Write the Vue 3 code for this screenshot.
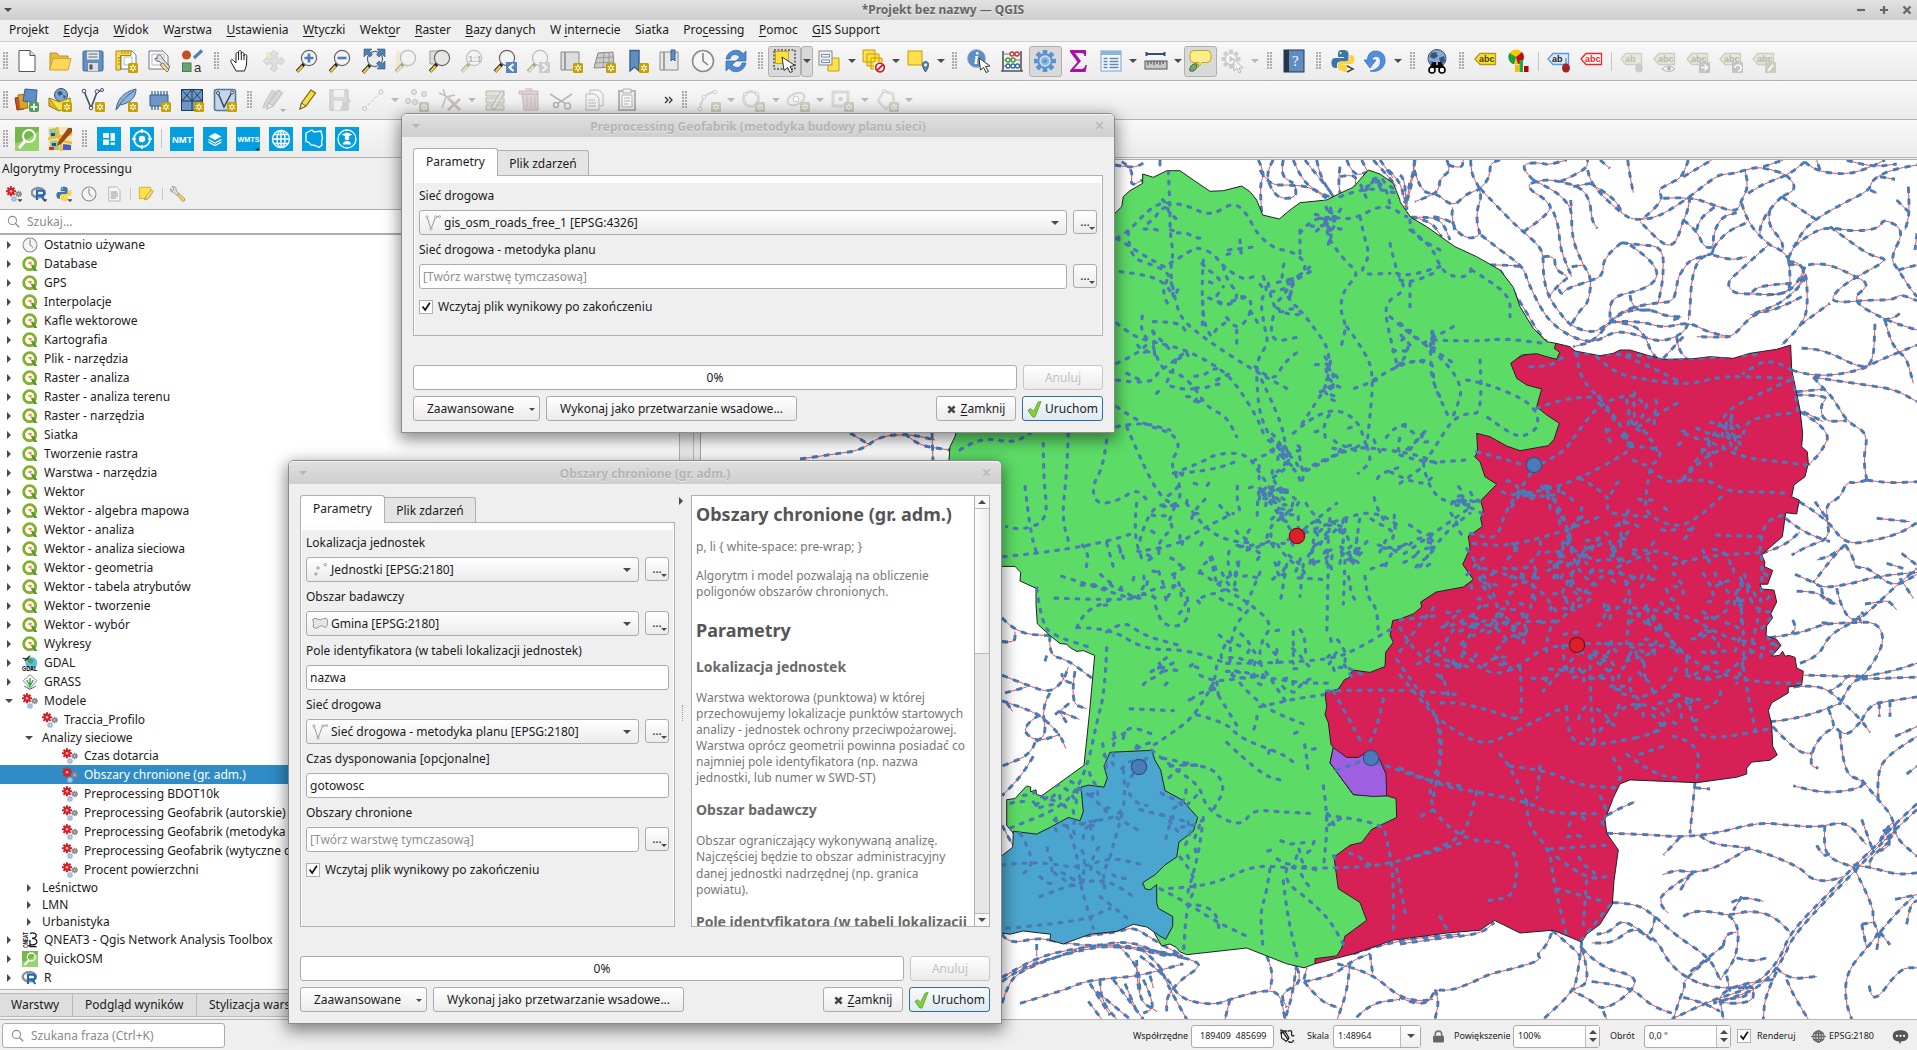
<script setup>
/* ---------- toolbar icons (24 x 24 artwork) ---------- */
const star = (c) => `<rect x="14" y="14" width="10" height="10" rx="1.5" fill="${c}"/><path d="M19 15.500v7M16 17.200l6 3.600M22 17.200l-6 3.600" stroke="#fff" stroke-width="1.300"/><circle cx="19" cy="19" r="1.100" fill="${c}"/>`
const badge = star('#c4a000')
const badgeOff = star('#8c8a6a')
const lens = (inner = '', fill = '#f4f4f4', x = 14, y = 9) =>
  `<path d="M${x - 5} ${y + 6}l-7 7.5" stroke="#222" stroke-width="3.4"/><path d="M${x - 6.5} ${y + 8}l-5 5.4" stroke="#f5c842" stroke-width="2.2"/><circle cx="${x}" cy="${y}" r="7.6" fill="${fill}" stroke="#666" stroke-width="1.2"/>${inner}`
const tag = (fill, stroke, color, txt = 'abc') =>
  `<path d="M1 10L6 4.500H21.500V15.500H6Z" fill="${fill}" stroke="${stroke}" stroke-width="1.300"/><text x="5" y="13.300" font-family="Liberation Sans, sans-serif" font-weight="bold" font-size="9" fill="${color}">${txt}</text>`
const gear = (cx, cy, r, c) => {
  let s = ''
  for (let i = 0; i < 8; i++) {
    const a = (i * Math.PI) / 4
    s += `M${cx} ${cy}L${(cx + Math.cos(a) * r).toFixed(1)} ${(cy + Math.sin(a) * r).toFixed(1)}`
  }
  return `<path d="${s}" stroke="${c}" stroke-width="${(r * 0.42).toFixed(1)}"/><circle cx="${cx}" cy="${cy}" r="${r * 0.68}" fill="${c}"/><circle cx="${cx}" cy="${cy}" r="${r * 0.25}" fill="#fff" opacity=".7"/>`
}
const models = gear(7.5, 8, 7.5, '#d42027') + gear(19, 12, 5, '#888') + gear(12, 19.5, 4.6, '#9db9dd')
const python = '<path d="M12 1c-5 0-5 2-5 4v3h6v1H4c-3 0-3.500 3-3.500 5s1 5 3.500 5h2v-3c0-2 1-3.500 3.500-3.500h5c2 0 3-1 3-3V5c0-3-2-4-5.500-4z" fill="#3a76a9"/><path d="M12.500 23c5 0 5-2 5-4v-3h-6v-1H20c3 0 3.500-3 3.500-5s-1-4-3-4h-2v3c0 2-1 3.500-3.500 3.500h-5c-2 0-3 1-3 3v3.500c0 2 2 3 5.500 3z" fill="#ffd23e"/><circle cx="9.500" cy="4" r="1" fill="#fff"/>'
const blueSq = (g) => `<rect width="24" height="24" fill="#049fe0"/>${g}`
const clock = '<circle cx="12" cy="12" r="10.500" fill="#f4f5f5" stroke="#8a8d8d" stroke-width="1.600"/><path d="M12 4v8l5 4" fill="none" stroke="#777" stroke-width="1.400"/>'
const rlogo = '<ellipse cx="11" cy="10" rx="10" ry="7" fill="none" stroke="#8d8f94" stroke-width="3.500"/><path d="M9 21V7h7c5 0 5 7 0 7h-7m6 0l5 7" fill="none" stroke="#2266b8" stroke-width="3.200"/>'
const magn = '<circle cx="14" cy="9" r="6" fill="none" stroke="#fff" stroke-width="2"/><path d="M10 14l-6 7" stroke="#fff" stroke-width="3"/>'
const pencil = (c, t) => `<path d="M5 21l1.500-6L16 2l4.500 3L11 18z" fill="${c}" stroke="${t}" stroke-width="1.200"/><path d="M5 21l1.500-6 4.500 3z" fill="#eee" stroke="${t}"/>`
const globe = '<circle cx="12" cy="9.500" r="9" fill="#8aa9cb" stroke="#34506f"/><path d="M6 4l5-1 2 4-4 3-4-2zM14 9l5-2 1 5-4 4zM5 12l4 1 1 4-3-1z" fill="#35577e"/>'
const menuMark = '<path d="M17 20h8l-4 4z" fill="#444"/>'

const icons = {
  page: '<path d="M4 1.500h11l5 5v16H4z" fill="#fff" stroke="#555"/><path d="M15 1.500v5h5" fill="#ddd" stroke="#555"/>',
  folder: '<path d="M2 21V4h7l2 3h9v4" fill="#e9bb3a" stroke="#b99225"/><path d="M1.500 21L5 9.500H23L20 21z" fill="#fcd75e" stroke="#d1a42b"/>',
  save: '<rect x="2" y="2" width="20" height="20" rx="1.500" fill="#6390c1" stroke="#3c6492"/><rect x="6" y="2.500" width="12" height="8" fill="#e6e6e6"/><path d="M7.500 5h9M7.500 8h9" stroke="#666"/><rect x="7" y="14" width="10" height="8" fill="#ddd"/><rect x="8.500" y="15.500" width="3" height="5" fill="#555"/>',
  layout: '<path d="M7 2h11l4 4v14H7z" fill="#fff" stroke="#777"/><path d="M10 8h8v8h-8z" fill="none" stroke="#9db9dd"/><path d="M2 2h15v4.500H6.500V21H2z" fill="#f6d94e" stroke="#a98b00"/><path d="M4 9h2M4 12h2M4 15h2M8 3v2M11 3v2M14 3v2" stroke="#8a7000" stroke-width=".8"/>' + badge,
  style: '<path d="M2 2h14l5 5v13H2z" fill="#fff" stroke="#777"/><path d="M5 5h12v11H5z" fill="none" stroke="#9db9dd"/><path d="M10 7c2-2 5-1 5 2l8 9-3 3-8-9c-3 1-4-1-4-3l2 1z" fill="#ddd" stroke="#666"/><path d="M16 14l6 7-2 2-7-7z" fill="#efd98a" stroke="#777"/>',
  symbols: '<circle cx="6.500" cy="6" r="4.500" fill="#c44f25"/><path d="M14 9L22 1.500" stroke="#4d80b5" stroke-width="3.200"/><rect x="2.500" y="14" width="8.500" height="8.500" fill="#6aa672" stroke="#487b50"/><text x="14" y="22.500" font-family="Liberation Sans, sans-serif" font-size="13" fill="#333">a</text>',
  hand: '<path d="M7 22l-5-9c-1-2 1-3 2.500-1.500L7 14V5c0-2 2.500-2 2.500 0V3c0-2 2.800-2 2.800 0v2c0-2 2.700-2 2.700 0v2c0-2 2.800-2 2.800 0l-.3 9-2 6z" fill="#fff" stroke="#222"/><path d="M9.500 5v6M12.300 5v6M15 6v5" stroke="#222"/>',
  pan: '<g opacity=".45"><rect x="4" y="3" width="13" height="13" fill="#eadf9c"/><path d="M12 1l4 4h-2v5h5V8l4 4-4 4v-2h-5v5h2l-4 4-4-4h2v-5H5v2l-4-4 4-4v2h5V5H8z" fill="#c4ccd2" stroke="#999" stroke-width=".8"/></g>',
  zin: lens('<path d="M14 4.500v9M9.500 9h9" stroke="#4c7fb8" stroke-width="2.600"/>'),
  zout: lens('<path d="M9.500 9h9" stroke="#4c7fb8" stroke-width="2.600"/>'),
  full: lens('<path d="M3 0h8L8.500 2.500l3 3-2.500 2.500-3-3L3 8zM24 0h-8l2.500 2.500-3 3 2.500 2.500 3-3L24 8zM24 20h-8l2.500-2.500-3-3 2.500-2.500 3 3 3-3z" fill="#4d7fb4" stroke="#2c5783" stroke-width=".6"/>', '#eaeaea', 14, 10),
  zsel: '<g opacity=".4"><path d="M2 2h12v17H2z" fill="#eadf9c"/>' + lens() + '</g>',
  zlay: '<path d="M3 2h12v13H3z" fill="#ddd" stroke="#999"/>' + lens('', '#e4e6e2', 15),
  znat: '<g opacity=".35">' + lens('<text x="8" y="12.500" font-family="Liberation Sans, sans-serif" font-weight="bold" font-size="9.500" fill="#444">1:1</text>') + '</g>',
  zlast: lens() + '<rect x="13" y="13" width="11" height="11" fill="#5585bd"/><path d="M20.500 15l-4 3.500 4 3.500" fill="none" stroke="#fff" stroke-width="2"/>',
  znext: '<g opacity=".4">' + lens() + '<rect x="13" y="13" width="11" height="11" fill="#999"/><path d="M16.500 15l4 3.500-4 3.500" fill="none" stroke="#fff" stroke-width="2"/></g>',
  newmap: '<path d="M2 3h4v18H2zM6 3h14v18H6z" fill="#ddd" stroke="#888"/>' + badge,
  new3d: '<path d="M6 4l15-1 1 15-20 1z" fill="#ccc" stroke="#888"/><path d="M4 9l17-1M3 14l18-1M12 4l-1 14M17 4v14" stroke="#888" stroke-width=".7"/>' + badge,
  bookm: '<path d="M5 1.500h9V22l-4.500-4L5 22z" fill="#5f8fc2" stroke="#39618f" stroke-width="1.400"/>' + badge,
  books: '<path d="M2 3h4v18H2zM6 3h14v18H6z" fill="#e8e8e8" stroke="#888"/><path d="M13 1h4v11l-2-2-2 2z" fill="#5f8fc2" stroke="#39618f"/>',
  clock,
  refresh: '<path d="M2 10C4 0 16-1 19 5l3-3v10H12l4-4C12 4 7 5 6 10zM22 14c-2 10-14 11-17 5l-3 3V12h10l-4 4c4 4 9 3 10-2z" fill="#4d8bd0" stroke="#2e64a4" stroke-width=".7"/>',
  select: '<path d="M1 1h21v19H1z" fill="none" stroke="#111" stroke-dasharray="2 1.500"/><rect x="2.500" y="2.500" width="13" height="12" fill="#fbe03e" stroke="#c5a60d"/><path d="M9 8l13 8.500-5 1 2.500 5-2.500 1-2.500-5-3.500 3z" fill="#fff" stroke="#333"/>',
  selval: '<path d="M11 9h11v13H11z" fill="#fce14b" stroke="#c4a000"/><rect x="2" y="2" width="13" height="14" fill="#eee" stroke="#888"/><path d="M4.500 5.500h8v2.500h-8zM4.500 11h8v2.500h-8z" fill="#fff" stroke="#6b8eb4"/>',
  desel: '<path d="M1 1h12v12H1zM5 5h12v12H5zM9 9h11v11H9z" fill="#fce14b" stroke="#c4a000"/><rect x="12" y="13" width="12" height="11" rx="2" fill="#fff"/><circle cx="18" cy="18.500" r="4.300" fill="none" stroke="#d42027" stroke-width="1.800"/><path d="M15 21.500l6-6" stroke="#d42027" stroke-width="1.800"/>',
  selloc: '<rect x="2" y="2" width="14" height="14" fill="#fce14b" stroke="#c4a000"/><path d="M19.500 23c-5-7-3-10.500 0-10.500s5 3.500 0 10.500z" fill="#5c84a8" stroke="#3b617f"/><circle cx="19.500" cy="16" r="1.400" fill="#fff"/>',
  info: '<circle cx="9.500" cy="9.500" r="8.800" fill="#5d8fc5" stroke="#7b9fc4"/><text x="7" y="15" font-family="Liberation Serif, serif" font-style="italic" font-weight="bold" font-size="16" fill="#fff">i</text><path d="M12 9l11 8-4.500.5 3 5-2.500 1-2.500-5-3 2.500z" fill="#fff" stroke="#333"/>',
  abacus: '<path d="M3 2v20M21 2v20M1 22h22" stroke="#555" stroke-width="1.600"/><path d="M3 5h18M3 11h18M3 17h18" stroke="#777"/><g fill="#fff" stroke-width="1.400"><g stroke="#c33"><circle cx="12" cy="5" r="2"/><circle cx="17" cy="5" r="2"/></g><g stroke="#3a9f3a"><circle cx="8" cy="11" r="2"/><circle cx="13" cy="11" r="2"/></g><g stroke="#356ba5"><circle cx="8" cy="17" r="2"/><circle cx="13" cy="17" r="2"/><circle cx="17.500" cy="17" r="2"/></g></g>',
  gear: gear(12, 12, 11, '#5d92d0') + '<circle cx="12" cy="12" r="5" fill="#8fb5e2" stroke="#d7e5f5" stroke-width="1.300"/><circle cx="12" cy="12" r="2" fill="#5d92d0"/>',
  sigma: '<path d="M4 1h16v6h-1.500c-.5-2-1-3-4-3H9l6 8-7 8h7c3 0 4-2 4.500-4H21l-1.500 7H4v-1.500L11.500 13 4 3z" fill="#a613a6"/>',
  table: '<rect x="2" y="2" width="20" height="20" fill="#f4f8fc" stroke="#7ba0c8"/><path d="M2 2h20v4H2z" fill="#8db3db"/><path d="M4.500 9.500h4M10.500 9.500h9M4.500 12.500h4M10.500 12.500h9M4.500 15.500h4M10.500 15.500h9M4.500 18.500h4M10.500 18.500h9" stroke="#5f88b5" stroke-width="1.300"/>',
  ruler: '<path d="M2 5h19M2.500 3v4M20.500 3v4" stroke="#2f4f79" stroke-width="2"/><rect x="1" y="12" width="22" height="8" fill="#c7c7c7" stroke="#555"/><path d="M4 12v4M7 12v3M10 12v4M13 12v3M16 12v4M19 12v3" stroke="#444"/>',
  tip: '<path d="M6 1.500h13q4 0 4 4v4q0 4-4 4h-5l-4 5 1-5H6q-4 0-4-4v-4q0-4 4-4z" fill="#fbee86" stroke="#bfa71c"/><path d="M2 22c-1-5 3-8 7-7 0 5-2 8-7 7z" fill="#71a86f" stroke="#3a653a"/>',
  action: '<g opacity=".35">' + gear(10, 10, 9.500, '#888') + '<circle cx="10" cy="10" r="5" fill="#fff"/><path d="M8.500 7l5 3-5 3z" fill="#777"/><path d="M13 10l9 9h-4l2 4-2 1-2-5-3 3z" fill="#fff" stroke="#555"/></g>',
  help: '<rect x="2" y="1" width="20" height="22" fill="#5f8cc2" stroke="#29384b"/><path d="M2 1h5v22H2z" fill="#263749"/><text x="10" y="17" font-family="Liberation Serif, serif" font-size="15" fill="#fff">?</text>',
  python: python + '<path d="M16 17l6 3-6 3" fill="#fff" stroke="#444" stroke-width="1.500"/>',
  undo: '<path d="M6 22c8 2 14-3 15-9C22 5 16 1.500 11 2 6 2.500 3.500 6 3.500 11H0l6 8 6-8H8c0-4 8-6 8.500 1 .3 4-3 9-10.500 10z" fill="#4f8fdf" stroke="#2f6cc0" stroke-width=".7"/>',
  globe: globe + '<path d="M8 13h3v3h2v-3h3l4 6v3h-6v-3h-4v3H4v-3z" fill="#0a0a0a"/><circle cx="7" cy="21" r="3" fill="#fff" stroke="#000" stroke-width="1.600"/><circle cx="17" cy="21" r="3" fill="#fff" stroke="#000" stroke-width="1.600"/>',
  tagY: tag('#f9e13b', '#b39a12', '#4b3d00'),
  pie: '<circle cx="9" cy="8" r="7.500" fill="#f9c700"/><path d="M9 8L2.500 4A7.500 7.500 0 0 0 7 15.300z" fill="#17a045"/><path d="M9 8l6-5a7.500 7.500 0 0 1-4 12.300z" fill="#c00d0d"/><path d="M8 16h4v7H8z" fill="#fb0"/><path d="M12.500 11h3.500v12h-3.500z" fill="#1faa4c"/><path d="M17 17h4.500v6H17z" fill="#b00"/>',
  tagB: tag('#d9ebfb', '#5b9ada', '#222', 'ab') + '<path d="M19 9v8" stroke="#666"/><ellipse cx="19" cy="19" rx="4" ry="4.500" fill="#a22525"/>',
  tagR: tag('#fff', '#e22', '#e22'),
  tg1: '<g opacity=".45">' + tag('#dedcc6', '#a9a78a', '#77756a', 'ab') + '<ellipse cx="19" cy="19" rx="3.800" ry="4.500" fill="#a89b9b"/></g>',
  tg2: '<g opacity=".5">' + tag('#dedcc6', '#a9a78a', '#77756a') + '<path d="M9 20q6-6 13 0-6 5-13 0z" fill="#fff" stroke="#777"/><circle cx="16" cy="19.500" r="2" fill="#777"/></g>',
  tg3: '<g opacity=".5">' + tag('#dedcc6', '#a9a78a', '#77756a') + '<rect x="13" y="13" width="11" height="11" rx="1" fill="#999"/><path d="M15 18.500h6M18.500 15.500l3 3-3 3" stroke="#fff" stroke-width="1.700" fill="none"/></g>',
  tg4: '<g opacity=".5">' + tag('#dedcc6', '#a9a78a', '#77756a') + '<rect x="13" y="13" width="11" height="11" rx="1" fill="#999"/><path d="M16 19a3 3 0 1 1 3 3" stroke="#fff" stroke-width="1.700" fill="none"/></g>',
  tg5: '<g opacity=".5">' + tag('#dedcc6', '#a9a78a', '#77756a') + '<rect x="13" y="13" width="11" height="11" rx="1" fill="#aaa88a"/><path d="M16 22l5-6" stroke="#fff" stroke-width="2"/></g>',
  dsm: '<path d="M0 10l6-1 3 12-7 1z" fill="#c44f25" stroke="#8d3413"/><path d="M3 7l8-1 2 14-8 1z" fill="#e0a12b" stroke="#a06f13"/><path d="M10 1l12 1-1 13-13-2z" fill="#5f8fc2" stroke="#39618f"/><rect x="14" y="14" width="10" height="10" rx="2" fill="#4f9c5a"/><path d="M19 15.500v7M15.500 19h7" stroke="#fff" stroke-width="1.600"/>',
  gpkg: '<path d="M1 10l10 4 11-4v8l-11 5-10-5z" fill="#e0bd1d" stroke="#8d7508"/><circle cx="13" cy="7" r="6.500" fill="#7fa3c9" stroke="#34506f"/><path d="M9 4l4-1 2 3-4 2zM15 7l3 1-2 3z" fill="#35577e"/><path d="M1 10l10 4 11-4v8l-11 5z" fill="#f4e04b" stroke="#8d7508" stroke-width=".6"/>' + badge,
  shp: '<path d="M3 3l7 17L16 4l5-2" fill="none" stroke="#3c5068" stroke-width="1.600"/><g fill="#fff" stroke="#3c5068"><circle cx="3" cy="3" r="1.800"/><circle cx="10" cy="20" r="1.800"/><circle cx="16" cy="3.500" r="1.800"/><circle cx="21" cy="2" r="1.500"/></g>' + badge,
  spl: '<path d="M2 22C3 12 9 4 22 1c0 8-5 14-16 16z" fill="#8fb3d6" stroke="#3d6690"/><path d="M2 22C7 14 12 8 20 3" stroke="#3d6690" fill="none"/>' + badge,
  mem: '<path d="M3 7h18v11H3z" fill="#6b97c8" stroke="#365c87"/><path d="M5 3v4M8 3v4M11 3v4M14 3v4M17 3v4M20 3v4M5 18v4M8 18v4M11 18v4" stroke="#365c87" stroke-width="1.200"/>' + badge,
  mesh: '<rect x="1.500" y="1.500" width="21" height="21" fill="#6b97c8" stroke="#233a55"/><path d="M12 1v22M1 13h22M12 1l-10 12M12 13L22 2M2 2l10 11M13 2l9 11" stroke="#233a55"/>' + badge,
  gpx: '<rect x="1.500" y="1.500" width="21" height="21" rx="2" fill="#c4d6e9" stroke="#52779d" stroke-width="1.600"/><path d="M5 5l6 14L19 4" fill="none" stroke="#2f4662" stroke-width="1.500"/><g fill="#fff" stroke="#2f4662"><circle cx="5" cy="5" r="1.500"/><circle cx="19" cy="4.500" r="1.500"/></g>' + badge,
  edits: '<g opacity=".4"><path d="M1 20l2-6L10 2l4 2L7 17z" fill="#b9aaa2" stroke="#888"/>' + pencil('#b9aaa2', '#777') + '<path d="M18 21h6l-3 3z" fill="#555"/></g>',
  edit: pencil('#f3df4e', '#776700'),
  saveE: '<g opacity=".35"><rect x="2" y="2" width="18" height="20" fill="#aaa" stroke="#666"/><path d="M6 2h10v7H6z" fill="#eee"/><path d="M6 13h8v9H6z" fill="#eee"/><path d="M12 22l2-5 7-7 2 3-7 8z" fill="#a89090"/></g>',
  line: '<g opacity=".35" stroke="#666" fill="#fff"><path d="M3 21L20 4" stroke-dasharray="3 2"/><circle cx="3.500" cy="20.500" r="2"/><circle cx="20" cy="4" r="2"/></g>',
  pts: '<g opacity=".4"><g fill="#ccc" stroke="#777"><circle cx="9" cy="4" r="2.500"/><circle cx="19" cy="6" r="2.500"/><circle cx="3" cy="13" r="2.500"/><circle cx="10" cy="14" r="2.500"/></g>' + badgeOff + '</g>',
  vertex: '<g opacity=".4"><path d="M5 1l3 8M1 5l7 3M4 20L8 9l9-2" stroke="#777" stroke-width="1.500"/><path d="M10 10l12 12M22 11L10 22" stroke="#8d7f6c" stroke-width="3"/></g>',
  attrs: '<g opacity=".4"><path d="M3 3h18v5H3zM3 10h18v5H3zM3 17h18v5H3z" fill="#cfcba5" stroke="#666"/><path d="M8 20L18 3l3 2-9 16z" fill="#ccc" stroke="#666"/></g>',
  trash: '<g opacity=".4"><path d="M6 6h16v16H8z" fill="#c9a7a7" stroke="#866"/><path d="M3 3h19v3H3zM9 1h7v2" fill="#c9a7a7" stroke="#866"/><path d="M11 9v11M15 9v11M19 9v11" stroke="#866"/></g>',
  cut: '<g opacity=".4" fill="none" stroke="#666" stroke-width="1.600"><path d="M1 6l16 10M23 6L11 14l-3 2"/><circle cx="18.500" cy="18" r="3"/><circle cx="7" cy="17" r="2.500"/></g>',
  copy: '<g opacity=".45" fill="#f4f4f4" stroke="#777"><path d="M8 2h9l4 4v12H8z"/><path d="M4 6h9l4 4v12H4z"/><path d="M6 12h7M6 15h8M6 18h8"/></g>',
  paste: '<g opacity=".5" fill="#eee" stroke="#777"><path d="M4 3h16v19H4z" stroke-width="2"/><path d="M8 1h8v4H8z"/><path d="M7 7h10v12H7z" fill="#fff"/><path d="M9 10h6M9 13h6M9 16h4"/></g>',
  s1: '<g opacity=".35"><path d="M3 22C4 11 8 5 18 4" fill="none" stroke="#999" stroke-width="2"/><g fill="#fff" stroke="#888"><circle cx="3" cy="21" r="1.800"/><circle cx="7" cy="9" r="1.800"/><circle cx="18" cy="4" r="1.800"/></g>' + badgeOff + '</g>',
  s2: '<g opacity=".35"><circle cx="10" cy="11" r="7.500" fill="none" stroke="#aaa" stroke-width="3"/><g fill="#fff" stroke="#888"><circle cx="4" cy="6" r="1.600"/><circle cx="16" cy="6" r="1.600"/></g>' + badgeOff + '</g>',
  s3: '<g opacity=".35"><ellipse cx="10" cy="11" rx="9" ry="5.500" fill="none" stroke="#999" stroke-width="2" transform="rotate(-25 10 11)"/><circle cx="10" cy="11" r="3" fill="#fff" stroke="#888"/>' + badgeOff + '</g>',
  s4: '<g opacity=".35"><path d="M3 4h15v14H3z" fill="none" stroke="#aaa" stroke-width="3"/><path d="M8.500 9h4v4h-4z" fill="#999"/>' + badgeOff + '</g>',
  s5: '<g opacity=".35"><path d="M9 3l9 3 1 8-8 7-8-8z" fill="none" stroke="#aaa" stroke-width="2.500"/><circle cx="9" cy="3" r="1.600" fill="#fff" stroke="#888"/>' + badgeOff + '</g>',
  more: '<path d="M17 9l3 3-3 3M21 9l3 3-3 3" fill="none" stroke="#333" stroke-width="1.300"/>',
  qosm: '<rect width="24" height="24" fill="#74b84a"/><path d="M0 16C8 15 18 10 24 3v21H0z" fill="#97d36c"/>' + magn,
  osm: '<rect width="24" height="24" fill="#f3e8c3"/><path d="M1 2l7-1 2 9-8 2zM2 14l7-1 3 10H2z" fill="#9bcf7a"/><path d="M0 12l24-5M9 0l5 24M14 14l10 2" stroke="#f2b632" stroke-width="2.500"/><path d="M15 17l8 1v5h-8z" fill="#3e63c4"/><path d="M3 6h4v3H3zM4 16h4v3H4z" fill="#2948a5"/><path d="M1 20h5v3H1z" fill="#c33"/><path d="M10 15L20 1h4v4L13 17l-4 2z" fill="#9c4a17"/>',
  b1: blueSq('<path d="M6 6h6v5H6zM13.500 6H18v8h-4.500zM6 12.500h6V18H6zM13.500 15.500H18V18h-4.500z" fill="#e9f6fd"/>'),
  b2: blueSq('<circle cx="12" cy="12" r="8" fill="none" stroke="#fff" stroke-width="1.800"/><circle cx="12" cy="12" r="3.200" fill="#fff"/><path d="M12 2v4M12 18v4M2 12h4M18 12h4" stroke="#fff" stroke-width="1.500"/>'),
  nmt: blueSq('<text x="2" y="15.500" font-family="Liberation Sans, sans-serif" font-weight="bold" font-size="9.500" fill="#fff">NMT</text>'),
  b3: blueSq('<path d="M12 6l6.500 3.500L12 13 5.500 9.500z" fill="#fff"/><path d="M5.500 12.500L12 16l6.500-3.500M5.500 15L12 18.500l6.500-3.500" stroke="#fff" stroke-width="1.400" fill="none"/>'),
  wmts: blueSq('<text x="1.500" y="14.500" font-family="Liberation Sans, sans-serif" font-weight="bold" font-size="7.200" fill="#fff">WMTS</text><path d="M19 21.500h5l-2.500 2.500z" fill="#333"/>'),
  b4: blueSq('<g fill="none" stroke="#fff" stroke-width="1.400"><circle cx="12" cy="12" r="8.500"/><ellipse cx="12" cy="12" rx="4" ry="8.500"/><path d="M12 3v18M3.500 12h17M5 7.500h14M5 16.500h14"/></g>'),
  b5: blueSq('<path d="M4 6l6-3 2 2 7-1 1.500 7-1 4 .5 3-3 2.500-4-2-4-.5-2-2.500-3-1z" fill="none" stroke="#fff" stroke-width="1.300"/>'),
  b6: blueSq('<circle cx="12" cy="12" r="9" fill="none" stroke="#fff" stroke-width="1.300"/><path d="M12 5.500l5.500 2-5.500 2.500-5.500-2.500z" fill="#fff"/><circle cx="12" cy="11" r="2.300" fill="#fff"/><path d="M8 17.500q0-3.500 4-3.500t4 3.500z" fill="#fff"/>'),
  models, rlogo,
  modelsM: models + menuMark,
  rlogoM: rlogo + menuMark,
  py: python + menuMark,
  doc: '<path d="M4 1.500h12l5 5v16H4z" fill="#f6f6f6" stroke="#999"/><path d="M7 9h10M7 12h11M7 15h11M7 18h8" stroke="#888" stroke-width="1.300"/>',
  note: '<path d="M2 2h17v13l-4 4H2z" fill="#fce14b" stroke="#c4a000"/><path d="M10 21l2-6 8-9 3 2-8 11z" fill="#eee08a" stroke="#998600"/>',
  wrench: '<path d="M3 1c5-1 7 2 6 5l4 5-3 3-5-5C2 10 0 7 1 4l3 3 2-2z" fill="#ddd" stroke="#777"/><path d="M13 11l9 8q1 4-3 4l-8-9z" fill="#f2d66c" stroke="#8d7a3a"/>',
  qgis: '<circle cx="11.500" cy="11.500" r="9" fill="#fff" stroke="#82b02a" stroke-width="4.200"/><path d="M13 13h4l6 9.500h-5z" fill="#5b9331"/><path d="M10 9h5l-2 5z" fill="#ee7913"/><circle cx="11" cy="10.500" r="1.800" fill="#f0a244"/>',
  gdal: '<circle cx="14" cy="12" r="9" fill="#5cbfe0"/><path d="M8 8l5-3 5 3-3 5-5-1z" fill="#4ba24b"/><path d="M1 5l9 1M4 9l8-8" stroke="#333" stroke-width="2"/><text x="0" y="23.500" font-family="Liberation Sans, sans-serif" font-weight="bold" font-size="9.500" textLength="23" lengthAdjust="spacingAndGlyphs" fill="#000">GDAL</text>',
  grass: '<path d="M12 1l10 9-10 12L2 10z" fill="#fff" stroke="#777" stroke-width="1.300"/><path d="M12 20V6M12 18L7 9M12 18l5-9" stroke="#2faa37" stroke-width="2.200"/><path d="M3 18l9 5 9-5" fill="none" stroke="#666" stroke-width="1.500"/>',
  qneat: '<text transform="translate(8.500 23.500) rotate(-90)" font-family="Liberation Sans, sans-serif" font-weight="bold" font-size="9.500" textLength="23" lengthAdjust="spacingAndGlyphs" fill="#111">QNEAT</text><path d="M12 2c12-3 12 8 3 7.500 11 0 9 12-2 9.500M12 12v10h10" fill="none" stroke="#111" stroke-width="1.900"/>',
  search: '<circle cx="10" cy="10" r="7.500" fill="none" stroke="#8a8a8a" stroke-width="2"/><path d="M15.500 15.500l7 7" stroke="#8a8a8a" stroke-width="2.500"/>',
  vline: '<path d="M3 3l6 18L16 3l6-1" fill="none" stroke="#8a8a8a" stroke-width="1.300"/><g fill="#fff" stroke="#888"><circle cx="3" cy="3" r="1.800"/><circle cx="9" cy="21" r="1.800"/><circle cx="16" cy="3" r="1.800"/><circle cx="22" cy="2.500" r="1.500"/></g>',
  vpoint: '<g fill="#fff" stroke="#888" stroke-width="1.300"><circle cx="6" cy="18" r="1.800"/><circle cx="9" cy="9" r="1.800"/><circle cx="20" cy="4" r="1.800"/></g>',
  vpoly: '<path d="M1 5Q4 2 9 5q4 2 8-1 5-2 6 1 1 6-1 11-3 3-6-1-4-1-6 2-5 3-8 0 1-6-1-12z" fill="#e5e5e5" stroke="#888" stroke-width="1.300"/>',
}

/* ---------- toolbars: icon name, or | separator, : handle, v drop-down ---------- */
const parse = (s) => s.trim().split(/\s+/)
const toolbars = [
  parse(': page folder save layout style symbols : hand pan zin zout full zsel zlay znat zlast znext newmap new3d bookm books clock refresh : *select *v selval v desel v selloc v : info abacus *gear sigma table v ruler v *tip action ~v : help : python undo v : globe : tagY pie | tagB tagR | tg1 tg2 tg3 tg4 tg5'),
  parse(': dsm gpkg shp spl mem mesh gpx : edits edit saveE line ~v pts vertex ~v attrs trash cut copy paste more : s1 ~v s2 ~v s3 ~v s4 ~v s5 ~v'),
  parse(': qosm osm : b1 b2 | nmt b3 wmts b4 b5 b6'),
].map((row) => row.map((t) => ({ on: t[0] === '*', dim: t[0] === '~', k: t.replace(/[*~]/, '') })))

const menus = ['Pro&jekt', '&Edycja', '&Widok', 'W&arstwa', '&Ustawienia', '&Wtyczki', 'Wekt&or', '&Raster', '&Bazy danych', 'W &internecie', 'Siatka', 'Pro&cessing', '&Pomoc', '&GIS Support'].map((m) => {
  const i = m.indexOf('&')
  return i < 0 ? [m, '', ''] : [m.slice(0, i), m[i + 1], m.slice(i + 2)]
})

/* ---------- processing tree ---------- */
const q = (t) => ({ t, icon: 'qgis', d: 0, a: 1 })
const m = (t, on) => ({ t, icon: 'models', d: 3, a: 0, on })
const tree = [
  { t: 'Ostatnio używane', icon: 'clock', d: 0, a: 1 },
  ...['Database', 'GPS', 'Interpolacje', 'Kafle wektorowe', 'Kartografia', 'Plik - narzędzia', 'Raster - analiza', 'Raster - analiza terenu', 'Raster - narzędzia', 'Siatka', 'Tworzenie rastra', 'Warstwa - narzędzia', 'Wektor', 'Wektor - algebra mapowa', 'Wektor - analiza', 'Wektor - analiza sieciowa', 'Wektor - geometria', 'Wektor - tabela atrybutów', 'Wektor - tworzenie', 'Wektor - wybór', 'Wykresy'].map(q),
  { t: 'GDAL', icon: 'gdal', d: 0, a: 1 },
  { t: 'GRASS', icon: 'grass', d: 0, a: 1 },
  { t: 'Modele', icon: 'models', d: 0, a: 2 },
  { t: 'Traccia_Profilo', icon: 'models', d: 2, a: 0 },
  { t: 'Analizy sieciowe', d: 1, a: 2 },
  m('Czas dotarcia'), m('Obszary chronione (gr. adm.)', true), m('Preprocessing BDOT10k'), m('Preprocessing Geofabrik (autorskie)'), m('Preprocessing Geofabrik (metodyka'), m('Preprocessing Geofabrik (wytyczne c'), m('Procent powierzchni'),
  { t: 'Leśnictwo', d: 1, a: 1 }, { t: 'LMN', d: 1, a: 1 }, { t: 'Urbanistyka', d: 1, a: 1 },
  { t: 'QNEAT3 - Qgis Network Analysis Toolbox', icon: 'qneat', d: 0, a: 1 },
  { t: 'QuickOSM', icon: 'qosm', d: 0, a: 1 },
  { t: 'R', icon: 'rlogo', d: 0, a: 1 },
]

/* ---------- dialogs ---------- */
const dialogs = [
  {
    id: 'first', title: 'Preprocessing Geofabrik (metodyka budowy planu sieci)',
    fields: [
      { l: 'Sieć drogowa', v: 'gis_osm_roads_free_1 [EPSG:4326]', type: 'combo', icon: 'vline', b: true },
      { l: 'Sieć drogowa - metodyka planu', v: '[Twórz warstwę tymczasową]', type: 'ph', b: true },
    ],
  },
  {
    id: 'second', title: 'Obszary chronione (gr. adm.)', help: true,
    fields: [
      { l: 'Lokalizacja jednostek', v: 'Jednostki [EPSG:2180]', type: 'combo', icon: 'vpoint', b: true },
      { l: 'Obszar badawczy', v: 'Gmina [EPSG:2180]', type: 'combo', icon: 'vpoly', b: true },
      { l: 'Pole identyfikatora (w tabeli lokalizacji jednostek)', v: 'nazwa', type: 'text' },
      { l: 'Sieć drogowa', v: 'Sieć drogowa - metodyka planu [EPSG:2180]', type: 'combo', icon: 'vline', b: true },
      { l: 'Czas dysponowania [opcjonalne]', v: 'gotowosc', type: 'text' },
      { l: 'Obszary chronione', v: '[Twórz warstwę tymczasową]', type: 'ph', b: true },
    ],
  },
]

/* ---------- map: each tile has its own origin and unit scale ---------- */
const tiles = { A: [940, 150, 3, 3], B: [1400, 150, 3, 3], C: [1000, 430, 3, 2.529], D: [1400, 430, 3, 2.529], F: [0, 0, 1, 1] }
const pts = (k, s) => {
  const [ox, oy, sx, sy] = tiles[k]
  const n = s.trim().split(/\s+/).map(Number)
  let o = ''
  for (let i = 0; i < n.length; i += 2) o += `${(ox + n[i] / sx).toFixed(1)} ${(oy + n[i + 1] / sy).toFixed(1)} `
  return o
}
const ring = (...parts) => 'M' + parts.map(([k, s]) => pts(k, s)).join('L') + 'Z'
/* roads bend smoothly: quadratic curves through the midpoints of each pair of vertices */
const smooth = (k, s) => {
  const n = pts(k, s).trim().split(' ').map(Number)
  const last = n.length / 2 - 1
  let o = `M${n[0]} ${n[1]}`
  for (let i = 1; i < last; i++) {
    o += `Q${n[2 * i]} ${n[2 * i + 1]} ${((n[2 * i] + n[2 * i + 2]) / 2).toFixed(1)} ${((n[2 * i + 1] + n[2 * i + 3]) / 2).toFixed(1)}`
  }
  return o + `L${n[2 * last]} ${n[2 * last + 1]}`
}
const roads = (k, s) => s.split(';').map((x) => smooth(k, x)).join('')

const green = ring(
  ['A', '27 930 30 890 45 860 60 800 300 500 525 190 545 170 550 140 570 122 608 100 608 72 640 82 680 62 720 62 760 90 810 124 850 122 905 108 930 125 950 150 968 195 1018 207 1050 180 1080 158 1160 150 1200 130 1240 112 1285 60 1320 72 1360 100 1380 150'],
  ['B', '0 155 32 202 80 230 165 290 230 320 300 360 340 412 360 470 400 535 440 575 468 580 463 595 479 607 470 628 440 620 410 611 365 615 332 640 350 685 380 705 425 717 410 770 440 795 478 820 462 868 445 887 360 902 320 888 270 860 230 850 233 905 224 920 240 935 255 980 290 1003 242 1052 250 1080 242 1105 247 1130 205 1158'],
  ['D', '210 300 188 340 220 378 190 397 108 410 62 435 65 448 40 465 0 478'],
  ['C', '1178 482 1170 520 1180 537 1157 562 1155 598 1110 613 1058 607 1050 625 1033 632 1015 655 975 665 980 700 975 720 985 740 993 795 1000 803 990 842 1060 922 1160 925 1188 932 1190 980 1115 1010 1085 1043 1050 1050 1002 1080 1015 1160 1080 1195 1100 1240 1035 1280 1025 1310 1010 1330 945 1337 945 1350 912 1360 860 1350 800 1330 740 1310 560 1327 540 1320 528 1308 510 1300 485 1305 465 1275 430 1200 200 1100 40 1020 20 1000 20 935 45 932 80 900 92 903 92 915 108 910 110 922 125 925 252 848 268 720 284 570 250 558 230 560 210 550 200 542 180 540 150 520 112 490 108 440 108 400 60 382 62 360 45 345 6 345 -300 330'],
)
const red = ring(
  ['B', '468 580 510 590 525 603 600 617 640 610 660 600 690 600 740 615 790 628 880 626 930 620 1000 625 1050 610 1130 598 1172 585 1175 660 1190 730 1200 780 1208 850 1205 890 1222 905 1225 940 1215 980 1182 1005 1175 1040 1198 1050 1190 1092 1157 1088 1147 1160'],
  ['D', '1085 315 1095 335 1092 345 1118 355 1103 390 1080 390 1085 402 1122 405 1130 435 1112 465 1118 475 1100 495 1098 520 1130 530 1143 545 1115 572 1138 570 1148 560 1155 572 1168 570 1185 575 1190 602 1210 610 1205 645 1165 650 1165 665 1115 690 1105 710 1115 745 1118 800 1132 822 1110 835 1055 840 1040 855 1040 870 1010 878 890 892 690 885 660 895 640 930 615 985 620 1020 655 1062 642 1140 637 1200 600 1250 560 1275 545 1295 460 1265 360 1272 283 1240 240 1265 140 1272 0 1288'],
  ['C', '1180 1290 1060 1325 945 1350 930 1300 930 600'], ['B', '100 1100 150 700'],
)
const blue = ring(['C', '-30 1100 38 1055 40 1015 110 1022 155 1003 205 980 240 988 250 965 243 903 265 898 312 903 322 880 312 850 330 815 455 810 465 835 482 860 495 912 545 935 593 980 580 1015 537 1042 530 1080 495 1100 465 1125 428 1145 435 1160 450 1163 470 1150 470 1195 475 1210 518 1230 518 1255 497 1288 480 1280 440 1257 400 1250 350 1268 270 1275 190 1300 150 1290 152 1275 70 1267 30 1275 -30 1268'])
const violet = ring(['C', '1000 803 1040 828 1075 828 1100 815 1140 835 1158 870 1160 925 1120 927 1060 922 1010 865 990 842'])

const outer =
  roads('A', '525 45 580 55 610 40;545 35 580 55 570 110 608 90;660 30 660 50;955 30 975 70 960 100 965 190;960 60 985 105 1050 105 1110 110 1160 145;1000 30 975 70 1000 130 1030 148 1070 140 1065 105;1030 30 1020 75 1060 100;1060 30 1080 80 1120 120 1180 145;1095 30 1110 50 1160 110 1185 145;1130 30 1140 80 1180 140;1200 50 1195 90 1200 130;1220 30 1240 80 1285 65;1200 80 1250 70 1245 110;1265 30 1280 60;1300 30 1350 85 1370 110;1320 30 1360 85;1345 60 1380 90 1395 160;1425 30 1415 110 1395 170') +
  roads('B', '0 75 15 85 18 180;43 30 43 60 25 110 20 180;43 60 62 128 110 130 160 172 200 130 240 120 270 80 270 40 300 30;140 30 155 60 120 85 118 110 108 130 45 155;145 45 185 58 190 30;212 30 212 70 240 115 243 150 230 180 232 230 243 255 205 268 165 240 155 200 158 172;240 115 330 210 370 245 420 290 430 320 430 380 445 440 480 490 515 530 580 550 620 525 650 495 700 470 775 458 820 455 830 410 835 380 855 350 870 330 940 310;32 202 100 200 130 220 150 270;32 202 90 210 125 260;100 200 155 210 165 240;243 255 300 300 370 350 385 400 420 470 450 515 510 560 580 580 640 545 690 548 740 565 790 575 850 550 865 520;270 345 330 345 370 352;300 360 370 470 410 540 440 575;370 245 460 185 440 150 390 120 385 100 440 88 480 95 540 110 570 150 575 210 592 235;400 90 370 60 375 40 420 38 445 45 500 30;400 90 460 120 495 150 515 180 515 240 525 290 550 345 575 385 565 460 540 480 510 530;480 95 560 60 563 30;563 60 570 95 610 140 665 190 700 210 760 205 810 180 870 140 920 100 960 72 1000 72 1060 52 1100 55 1165 75 1190 118 1145 140;520 110 570 100;683 30 690 80 700 128;600 30 630 55;570 100 640 140 665 185;865 30 850 80 810 100 772 120 790 145 750 190 720 210;850 80 935 30;790 145 870 140 940 165 1010 188 1025 150 1045 110 1035 60;1045 130 1080 105 1165 75 1215 35;870 140 865 180 850 210 835 260 820 285 790 285 720 215;850 210 890 240 910 290 940 295 940 250 965 200 1010 188;890 240 895 210 945 170;1025 160 1040 215 1105 285 1145 300 1165 325;1145 140 1105 180 1080 230 1080 255;1145 140 1250 210;1110 180 1100 220 1145 270 1150 300;940 295 970 250 1040 218;1165 325 1200 250 1250 205 1330 160 1410 120 1415 90 1470 60 1551 45;1090 50 1150 30;1215 35 1240 62 1340 75 1410 52 1455 30;1260 60 1250 30;1340 30 1410 52 1490 42;1410 120 1432 130;1440 80 1485 88;1180 290 1225 255 1280 230 1360 245 1440 235 1450 205 1515 240 1470 325 1495 360 1530 415 1551 440;1290 230 1370 290 1420 320 1468 328 1370 380 1310 420 1290 460 1410 450 1480 450 1500 432 1551 452;1165 325 1175 400 1155 435 1050 432 1000 430 980 400 1010 370 1105 285;1165 335 1215 330 1225 470 1205 525 1145 585;1215 350 1200 390 1160 430 1100 435;1165 345 1200 340 1215 370 1190 420;1225 345 1270 335 1370 380 1410 405 1350 450 1455 510 1551 540;1175 400 1080 405 1050 432;1205 440 1130 480 1060 490 1000 560 960 562 890 560;1220 380 1170 450 1050 495;1200 525 1290 460;665 278 610 320 610 375 575 392 500 415 485 435 475 415;665 278 720 285 790 290 790 385 775 458;690 285 750 325 780 380 730 420 630 440 630 515;940 295 940 315 900 320 875 380 870 480 865 510;840 500 800 500 760 480 680 480 630 515 580 575 520 590;630 515 720 512 790 535 865 515 920 545 985 560;690 435 695 480 760 480;630 515 700 520 740 565 750 600 770 625;820 510 845 500;830 560 835 600 860 625;790 625 850 560;430 320 465 315 465 360 510 380 480 400 445 440;460 185 475 220 480 290 500 345 515 380;512 150 515 185;515 350 550 345;1205 595 1265 595 1380 655 1420 640 1425 520;1175 660 1240 682 1370 665 1440 630 1500 605 1551 585;1240 682 1400 705 1490 720 1551 755;1240 682 1270 715 1300 745 1340 815 1405 850 1390 925 1400 990;1190 725 1270 718;1190 735 1290 735 1260 765 1270 815 1340 812;1200 785 1295 840 1265 905 1225 945;1210 785 1270 815;1455 510 1470 570 1495 605 1520 625 1540 700;1450 510 1480 505 1500 490;940 315 990 332 1040 320;1400 990 1370 1000 1340 995 1320 1045 1280 1060 1280 1105 1290 1165 1220 1190 1175 1215;1400 990 1460 1000 1551 995;1198 1055 1280 1105 1335 1185 1430 1170 1500 1150 1551 1118;1245 1055 1280 1105;1157 1105 1205 1145 1290 1175;1085 1210 1150 1190 1200 1145;1430 1105 1530 1115;1335 1185 1300 1215 1250 1230;1525 110 1530 190 1515 240;1490 150 1530 190;1495 360 1551 345;1551 250 1545 300') +
  roads('D', '1335 290 1360 320 1365 350 1400 345 1480 400 1551 365;1185 365 1240 385 1270 400 1360 388 1430 370 1551 360;1190 408 1255 408 1280 435 1310 440;1335 290 1300 320 1255 370 1240 385;1310 400 1320 440 1355 487 1400 465 1480 400 1551 350;1265 400 1265 420 1300 435;1110 525 1200 515 1270 490 1355 487 1430 485 1455 530 1420 590 1385 625;1385 625 1300 622 1210 620;1200 590 1255 575 1285 520 1355 487;1265 487 1300 490;1178 480 1190 500 1175 515;1395 440 1440 435 1465 430 1490 455;1360 487 1390 460;1375 470 1385 490;1505 312 1551 342;1460 337 1510 350;1500 375 1540 425;1385 625 1470 612 1551 590;1385 630 1551 625;1385 625 1345 615 1330 640 1290 660;1180 650 1260 642 1325 685 1385 735 1410 765;1325 685 1350 640 1385 628;1110 738 1200 730 1325 690;1385 735 1405 695 1470 685 1551 675;1438 690 1438 725;1470 685 1470 725;1285 705 1310 755 1280 760 1240 800 1230 850 1255 855;1118 750 1190 815 1235 818;1310 755 1335 780 1385 735;1320 765 1330 870 1385 885 1390 905 1280 920 1180 900;1385 885 1435 935 1480 980 1485 1030 1551 1078;1435 935 1430 870 1460 825 1551 775;1485 775 1551 750;1551 945 1480 1000 1430 1050 1360 1105 1300 1160 1170 1270 1140 1340 1060 1410 940 1440 815 1490;1551 960 1485 1010 1365 1115 1180 1275 1150 1340 1080 1410 1000 1435 940 1450;1440 1040 1470 990 1490 1000 1470 1040 1440 1030;1450 1010 1480 1045 1440 1065;1360 1105 1420 1200 1418 1245 1440 1270 1400 1310 1340 1370 1335 1440 1355 1490;1360 1100 1410 1105 1490 1125 1551 1120;1385 985 1415 1055;1470 1040 1410 1080 1410 1105;1275 1000 1270 1050 1290 1085 1360 1105;620 1020 730 1022 840 1030 950 1020 1075 992 1170 1000 1260 1005 1340 988 1400 1050;885 892 870 1020;885 905 930 908;840 1030 790 1075;900 1025 925 1048 1050 1055 1200 1105 1230 1135 1280 1142 1330 1130;1050 1055 960 1105 880 1120 830 1112 787 1125;880 1120 785 1170 780 1200 805 1222;870 1125 840 1165;620 975 650 960 705 940;637 1195 710 1197 765 1230 830 1280 930 1335 960 1390;765 1230 755 1290 700 1255 640 1298 575 1297;755 1290 675 1230 630 1270 590 1275;755 1285 775 1295 800 1340 855 1385 940 1412 1060 1410;850 1230 880 1215 950 1220 985 1228 1050 1215 1120 1228 1170 1270;985 1228 1018 1245 1010 1335 960 1390;970 1305 975 1275 1010 1270;970 1305 870 1370;930 1335 850 1390 855 1410 840 1435 820 1490;1010 1335 1055 1345 1100 1335;1025 1180 1000 1215;995 1195 1025 1180 1090 1192;1130 1360 1160 1390 1250 1382;1160 1390 1180 1430 1225 1490;1130 1370 1095 1430 1090 1490;545 1295 535 1370 520 1420 430 1490;545 1310 575 1395 520 1415;545 1310 600 1360 710 1380 697 1420 610 1470 570 1440 520 1420;575 1395 690 1405 750 1455 815 1475;610 1470 620 1490;455 1265 520 1310 540 1330;455 1272 440 1305 410 1325 425 1340 350 1360 270 1375 210 1400 150 1418 105 1415 85 1450 40 1450 0 1435;105 1415 118 1440 105 1490;0 1300 120 1285 240 1275 283 1245;1385 1250 1418 1245;1385 1250 1400 1310;1440 1270 1470 1302;1440 1270 1430 1315;1440 1270 1490 1220 1540 1180;1485 1187 1551 1175;1520 1250 1530 1200 1551 1190;1408 1405 1415 1460 1500 1360 1551 1360;1120 1390 1000 1400 940 1450 1060 1450 1060 1410;1030 1400 1060 1430 980 1440;850 1435 900 1445 960 1470;1250 1050 1270 1080 1290 1070;980 1380 990 1420;960 1440 970 1490;1520 870 1551 850') +
  roads('C', '6 475 50 515 150 520;6 535 45 540 45 510;150 520 145 570 200 580 280 630;135 585 140 570;6 620 80 645 150 665 190 635 205 600;15 665 80 650;6 685 60 700 120 720 180 770 197 805;20 690 38 712;225 610 210 690 260 705;150 665 125 700 140 770 105 790;120 720 60 750 105 790 180 770;105 790 95 820 6 850;100 825 70 870 6 925;165 720 210 690;180 712 238 732;200 740 180 715;215 640 190 635 185 615;6 1000 38 1050;6 1275 25 1300 110 1285 150 1290;6 1385 100 1335 230 1310 350 1300 480 1320 550 1330;6 1395 60 1360 200 1325 300 1305 400 1310 500 1330;6 1450 25 1400 60 1370 130 1345 230 1315;110 1300 110 1330;150 1290 260 1310 380 1290 470 1320 550 1335;150 1290 350 1272 400 1255 470 1295 550 1330;60 1450 200 1415 250 1395 350 1385 420 1380 550 1350;350 1300 415 1350 420 1420;420 1310 480 1350 500 1400 560 1490;420 1330 500 1380 540 1440 640 1455 690 1440 780 1418 840 1420 855 1490;550 1335 600 1345 590 1365 550 1385 500 1430 500 1470;690 1440 675 1490;800 1330 820 1370 810 1415;890 1350 880 1420 855 1490;912 1390 920 1360;912 1395 960 1445 1012 1460;912 1395 990 1385 1060 1340 1110 1325;890 1360 912 1395 840 1425 860 1460;1050 1345 1045 1410 1012 1490;1012 1350 1110 1370 1190 1430 1250 1445 1300 1440;1110 1325 1118 1375;1070 1485 1110 1450 1200 1440;270 1400 330 1480;300 1390 300 1440 350 1490;340 1390 430 1490;375 1400 410 1470;430 1390 470 1460 430 1475;450 1380 460 1410;265 1445 305 1490;290 1420 390 1490;1060 1325 1180 1290 1380 1275;410 1340 410 1440 470 1470') +
  roads('F', '800 459 835 454 862 450 880 436 910 434 935 440;905 433 915 445 950 450;932 433 933 462;850 433 870 445')

const inner =
  roads('A', '685 62 690 160 690 250 700 310 690 360 705 450 725 510 800 570 930 655 1040 715;530 265 565 245 610 195 660 155 740 165 810 200 880 155 920 190 950 250 1000 295 1060 305 1100 340 1085 380 1000 400;565 245 565 320 640 345 690 370 700 440;530 265 600 310 690 360;540 365 630 375 680 405 700 440;690 340 740 310 770 290 820 310 850 350 910 390 940 380;790 330 785 400 790 520 820 570;900 270 905 330;865 300 950 290;850 350 855 380 900 440 860 470 820 450 850 410;905 440 935 440 930 500 890 540 850 490;890 540 890 600;970 380 985 420 960 450 975 540 985 580 950 630 950 700 960 800 1000 880 1040 920;985 400 1000 500 1070 465 1120 530 1170 600 1165 700 1120 770 1080 830;1050 440 1050 400 1120 360;1000 500 980 580 1080 560;945 650 1000 700 1030 640 1080 600;950 660 1020 800 1040 900;530 520 580 560 640 575 740 600 850 660 900 720 950 800 970 850;530 640 640 590 600 540 610 480;640 590 660 660 720 670 770 720 800 770 860 800 890 860;530 690 630 705 660 660;560 670 600 690;640 515 720 515 740 550;740 740 780 740 750 765 790 750;830 690 870 670;530 770 600 820 700 850 720 890 690 940 720 1000 720 1060 670 1070;530 830 600 815 690 840;560 830 620 970 670 1050 720 1070;500 870 490 950 455 1010 470 1065 540 1050 590 1015 630 1060;590 1060 580 1150 610 1240;600 1170 630 1060 720 1070;310 880 310 980 325 1110 250 1140 200 1130;385 850 380 980 365 1100 390 1190;255 1010 270 1140 290 1210;190 1220 300 1210 480 1180 580 1150;60 900 120 860 220 880 270 850;500 1180 520 1250;700 970 780 940 830 910 920 910 960 970 1000 1030;720 970 820 960 900 930;1170 270 1210 330 1260 370 1210 420 1200 480 1220 530 1200 600;1260 200 1270 250 1290 320 1255 375 1350 370;1220 530 1280 610 1300 680 1290 800 1280 890;1300 690 1380 640 1480 625 1480 700 1500 740;1310 690 1230 720;1350 280 1370 370 1400 420 1330 460 1350 560 1370 640;1370 370 1400 380 1500 350;1350 500 1440 580 1500 600;1410 210 1410 250 1500 300;1080 250 1110 210 1170 200 1240 210 1330 160 1400 200;1200 140 1280 110 1370 130;1280 110 1320 90;1080 310 1080 240;1090 960 1210 900 1280 890 1440 915 1500 945;1100 962 1210 905;1280 890 1300 930 1255 970;1350 965 1440 1010 1480 980;1060 850 1150 770 1250 800 1280 890;970 1030 1020 1100 1040 1120 1065 1160;1065 1160 1140 1100 1190 1060;1065 1160 1240 1090 1320 1090 1380 1130;1075 1100 1075 1140;1110 1240 1130 1110;1160 1240 1170 1100;1200 1240 1220 1100;1240 1240 1260 1100;620 1200 700 1190 780 1140 880 1090;900 1190 980 1180 1060 1180;740 1060 780 1120 850 1170 940 1180') +
  roads('B', '30 240 90 280 120 350 150 380 210 380 215 340;215 360 265 390 330 440 330 500;0 390 30 400 100 370;30 400 30 470;0 520 70 580 95 600 90 680 150 810;70 580 160 530;100 570 220 575 310 565 430 580;95 600 200 690 155 810;0 640 90 630;240 630 250 790 200 790 155 810 100 900 70 940;200 690 260 700 400 760 420 830 370 862 330 850 260 800;0 915 70 940 200 930;70 940 80 1000 130 1060 220 1050;0 1000 70 950;60 1250 130 1150 210 1090;200 1080 0 1220;390 650 450 650 490 620;530 610 535 680 605 750 660 820 690 890 680 910 540 985 440 1020 370 1030;590 620 640 670 740 690 860 705 960 680 1040 680 1160 685;680 620 750 650 830 690;410 775 490 745 600 740;425 940 490 910 530 850 600 760 700 730 730 760;680 750 690 830 740 850;830 760 760 800 700 840;1175 660 1110 620 1030 670;1170 690 1060 740 980 780 940 860 850 985;890 835 940 860 1040 860;1170 790 1050 800 1030 850;940 880 1010 920 1140 935 1220 945;850 990 900 930 960 900;690 890 780 890 780 930 740 950 700 930;750 960 800 1000 850 990 930 990 980 1025 1080 1025 1170 1030;750 960 735 1040 740 1095 830 1135 900 1100 980 1025;540 985 640 1040 610 1090 740 1100;410 945 350 1030 310 1100 290 1170 210 1150;230 905 290 920 370 945;220 1180 300 1190 400 1170 500 1140 600 1100;440 1020 500 1100 500 1180 560 1240;360 1030 440 1040;1080 1200 1085 1120 1150 1095;950 1155 1085 1160;700 1200 790 1200 850 1240;525 610 700 612 790 628 930 624 1090 612;1180 680 1195 800') +
  roads('D', '0 620 60 680 110 730 240 800 330 770 440 720 500 700;110 730 130 840 85 890 100 960;0 855 120 900 230 915 380 940 450 970 600 970;100 960 45 985;100 960 170 1040 350 1040 350 1180 265 1190;230 915 210 990 170 1040 20 1085;380 940 380 1000 450 1060 460 1140 500 1280;450 1060 620 1050;470 1080 560 1140 640 1125;560 1140 550 1250;470 1160 600 1190;190 560 230 600 300 620 370 590 430 550 510 545;540 560 600 590 640 620 640 660 720 680 800 650 830 600;540 560 480 610 430 660;560 540 700 540 860 550 860 620;570 570 570 700 590 800 560 780;440 560 440 500 500 470 560 400 640 350 750 310;200 300 280 400 300 480 220 520;250 350 400 380 470 460;500 250 520 350 600 400;690 430 680 540;760 470 830 560 960 620 1100 640 1200 640;700 450 850 460 960 520 1060 540;860 620 930 640 1000 600 1060 560;1020 430 1040 560 1010 640;1085 320 1090 420 1050 560;870 700 880 770 960 780 1110 755;1030 600 1050 700 1070 770;640 830 670 860 650 900;820 775 900 790 890 890;680 820 760 870 830 880;720 820 790 800;330 850 440 860 540 900 650 905;300 820 330 850 380 940;420 850 410 930;360 600 370 720 345 730;345 730 200 690 120 690;500 700 500 780 570 800 700 780;600 760 660 700 730 690 800 720 790 760 700 780;0 480 110 470;0 500 60 590 180 600;180 600 190 540 250 470 350 500;545 1290 640 1190;820 340 900 320 1080 310') +
  roads('C', '185 370 300 400 400 430 460 400 560 390 570 490 490 500 460 430;165 425 330 430 420 425;230 500 250 460 330 430;110 400 125 490 160 520 270 550;230 500 330 500 430 555 560 555 680 590;320 510 370 480 430 520 540 545;320 550 315 660 290 740 260 860 200 950 20 1010;600 360 690 410 750 440 820 490 780 540 780 590;690 585 690 510 750 450;780 360 740 440;860 340 840 440;910 340 900 420;985 340 980 520;1035 330 1030 440;880 510 880 590;1095 370 1100 420 1130 450 1135 510;680 590 800 590 1000 580 1080 550 1180 500;600 620 640 640 760 620 900 640 1000 640;640 640 590 720 510 770 455 800;390 705 520 710;370 780 375 745 460 770;590 720 680 740 720 780 850 820 880 840;640 650 720 760;720 640 780 700 930 750;780 700 880 680 970 670;780 590 860 690;680 790 780 870 840 885;455 810 530 860 600 900 620 960 720 1005 760 960 830 965 940 970;610 980 600 1060 560 1180;510 850 620 840 680 900 640 960;490 830 600 850;970 900 985 980 970 1110;980 975 1150 990 1160 1040 1180 1110 1180 1280;1380 1045 1180 1100 1000 1108 870 1108 760 1100 640 1150 500 1160;860 1110 850 1140 930 1190 990 1240 1030 1300;810 1110 800 1170 780 1220 790 1320;850 1140 860 1220 890 1330;540 1080 600 1140 560 1200 550 1330;480 1160 560 1195 640 1240 740 1280;560 1200 640 1200 660 1270;1000 660 1040 720 1090 800;1150 680 1130 760 1100 800;980 660 1200 655 1380 670;1130 840 1250 880 1380 900;1190 580 1230 630 1310 720 1330 800 1300 930;1200 560 1250 500 1310 440;1190 1110 1220 1240;1320 1230 1345 1270;1010 860 1110 830;370 860 380 940 350 980 270 990;6 1100 110 1090 240 1110 330 1080 430 1100;60 1020 110 1090 60 1130;200 1000 230 1060 240 1150 280 1260;120 1180 240 1140 330 1140 400 1180;440 830 370 890 400 940 440 950;350 980 430 1020;330 1080 370 960;20 1260 240 1245 330 1210;300 1180 390 1240;420 960 560 990')

/* local streets: short seeded walks around each settlement [cx, cy, rx, ry, count] */
let seed = 71
const rnd = () => ((seed = (seed * 16807) % 2147483647), seed / 2147483647)
const towns = [
  [1329, 221, 8, 11, 14], [1274, 494, 16, 9, 20], [1286, 454, 6, 9, 11], [1329, 380, 5, 22, 11], [1380, 186, 20, 8, 7], [1284, 514, 9, 10, 7],
  [1290, 560, 95, 22, 30], [1350, 540, 55, 30, 24], [1210, 500, 80, 50, 24], [1180, 585, 70, 20, 16], [1130, 575, 55, 35, 16], [1270, 660, 80, 35, 26],
  [1190, 680, 45, 22, 14], [1230, 290, 70, 40, 18], [1170, 370, 40, 25, 12], [1170, 240, 30, 30, 5], [1420, 345, 25, 20, 10], [1460, 505, 22, 10, 9], [1325, 440, 50, 22, 10],
  [1425, 550, 22, 20, 12], [1250, 730, 80, 60, 8], [1190, 830, 30, 30, 10], [1310, 850, 45, 40, 12], [1410, 450, 35, 20, 9],
  [1560, 570, 60, 40, 34], [1560, 640, 100, 40, 36], [1640, 560, 90, 40, 28], [1740, 590, 30, 50, 22], [1700, 640, 80, 30, 24], [1600, 680, 60, 30, 18], [1670, 710, 50, 15, 14],
  [1540, 492, 28, 10, 12], [1720, 435, 50, 20, 14], [1630, 425, 25, 15, 10], [1480, 620, 50, 30, 18], [1440, 660, 30, 20, 8], [1600, 510, 70, 30, 12], [1585, 830, 25, 30, 6],
  [1080, 810, 30, 25, 16], [1040, 790, 22, 22, 10], [1120, 750, 25, 20, 7], [1080, 880, 50, 14, 10], [1500, 575, 40, 20, 12],
]
let streets = ''
for (const [cx, cy, rx, ry, n] of towns) {
  for (let i = 0; i < n; i++) {
    const a = rnd() * 6.283
    const r = Math.sqrt(rnd())
    let x = cx + Math.cos(a) * r * rx
    let y = cy + Math.sin(a) * r * ry
    let t = rnd() * 6.283
    streets += `M${x.toFixed(1)} ${y.toFixed(1)}`
    const steps = 1 + Math.floor(rnd() * 3)
    for (let j = 0; j < steps; j++) {
      t += (rnd() - 0.5) * 1.2
      x += Math.cos(t) * 9
      y += Math.sin(t) * 9
      streets += `L${x.toFixed(1)} ${y.toFixed(1)}`
    }
  }
}
const markers = [[1297, 536, 'r'], [1577, 645, 'r'], [1534, 465, 'b'], [1139, 767, 'b'], [1371, 758, 'b']]
</script>

<template>
  <div class="app">
    <header class="titlebar"><i class="tri down"></i><b>*Projekt bez nazwy — QGIS</b><span class="wm"><svg viewBox="0 0 10 10"><path d="M1 5h8" /></svg><svg viewBox="0 0 10 10"><path d="M1 5h8M5 1v8" /></svg><svg viewBox="0 0 10 10"><path d="M1.500 1.500l7 7M8.500 1.500l-7 7" /></svg></span></header>
    <nav class="menubar"><span v-for="(x, i) in menus" :key="i">{{ x[0] }}<u>{{ x[1] }}</u>{{ x[2] }}</span></nav>
    <div v-for="(row, r) in toolbars" :key="r" class="toolbar">
      <template v-for="(c, i) in row" :key="i">
        <span v-if="c.k === ':'" class="handle" :class="{ lead: i === 0 }"></span>
        <span v-else-if="c.k === '|'" class="vsep"></span>
        <span v-else-if="c.k === 'v'" class="dd" :class="{ on: c.on, dim: c.dim }"><i class="tri down"></i></span>
        <span v-else class="tool" :class="{ on: c.on }"><svg viewBox="0 0 24 24" v-html="icons[c.k]"></svg></span>
      </template>
    </div>

    <main class="work">
      <section class="panel">
        <h2>Algorytmy Processingu</h2>
        <div class="ptools">
          <svg viewBox="0 0 24 24" v-html="icons.modelsM"></svg><svg viewBox="0 0 24 24" v-html="icons.rlogoM"></svg><svg viewBox="0 0 24 24" v-html="icons.py"></svg><svg viewBox="0 0 24 24" v-html="icons.clock"></svg><svg viewBox="0 0 24 24" v-html="icons.doc"></svg><i class="ps"></i><svg viewBox="0 0 24 24" v-html="icons.note"></svg><i class="ps"></i><svg viewBox="0 0 24 24" v-html="icons.wrench"></svg>
        </div>
        <div class="psearch"><svg viewBox="0 0 24 24" v-html="icons.search"></svg>Szukaj...</div>
        <ul class="tree">
          <li v-for="(n, i) in tree" :key="i" :class="['d' + n.d, { on: n.on, plain: !n.icon }]">
            <span class="tw"><i v-if="n.a" class="tri" :class="n.a === 2 ? 'down' : 'right'"></i></span>
            <svg v-if="n.icon" viewBox="0 0 24 24" v-html="icons[n.icon]"></svg>{{ n.t }}
          </li>
        </ul>
        <div class="ptabs"><span>Warstwy</span><span>Podgląd wyników</span><span>Stylizacja warstwy</span></div>
      </section>
      <div class="split"></div>
      <svg class="map" viewBox="701 160 1216 859">
        <clipPath id="zones"><path :d="green" /><path :d="red" /><path :d="blue" /></clipPath>
        <rect x="701" y="160" width="1216" height="859" fill="#fff" />
        <path :d="outer" class="rl" /><path :d="outer" class="rd" />
        <path :d="red" class="zone" fill="#d72056" />
        <path :d="green" class="zone" fill="#5cdc66" />
        <path :d="blue" class="zone" fill="#4aa6ce" />
        <path :d="violet" class="zone" fill="#9e5fe0" />
        <g clip-path="url(#zones)"><path :d="inner" class="ri" /><path :d="streets" class="ri" /></g>
        <circle v-for="(k, i) in markers" :key="i" :cx="k[0]" :cy="k[1]" r="7.700" :class="'mk ' + k[2]" />
      </svg>
    </main>

    <footer class="status">
      <div class="locator"><svg viewBox="0 0 24 24" v-html="icons.search"></svg>Szukana fraza (Ctrl+K)</div>
      <div class="sright">
        <span class="w1">Współrzędne</span><div class="sf coord">189409&nbsp; 485699</div>
        <svg class="mouse" viewBox="0 0 24 24"><path d="M3 3l6 2 6 10-4 5-7-5z" fill="#fff" stroke="#222" stroke-width="1.800" /><path d="M5 5l9 13M2 8l10-4M13 5q7-3 6 3t4 3M14 20q6 4 8-2" fill="none" stroke="#222" stroke-width="2" /></svg>
        <span class="w2">Skala</span><div class="sf scale">1:48964<em><i class="tri down"></i></em></div>
        <svg class="lock" viewBox="0 0 24 24"><path d="M6 11V8a6 6 0 0 1 12 0v3" fill="none" stroke="#777" stroke-width="3" /><rect x="2" y="10.500" width="20" height="12.500" rx="2" fill="#666" /></svg>
        <span class="w3">Powiększenie</span><div class="sf spin">100%<em><i class="tri up"></i><i class="tri down"></i></em></div>
        <span class="w4">Obrót</span><div class="sf spin">0,0 °<em><i class="tri up"></i><i class="tri down"></i></em></div>
        <span class="chk"><svg viewBox="0 0 14 14"><path d="M3 6.500l3 4 5.500-8.500" /></svg></span><span class="w5">Renderuj</span>
        <svg class="crs" viewBox="0 0 24 24"><g fill="none" stroke="#666" stroke-width="1.700"><circle cx="12" cy="12" r="9" fill="#bbb" /><ellipse cx="12" cy="12" rx="4.500" ry="9" /><path d="M0 12h24M4 7h16M4 17h16M12 3v18" /></g></svg>
        <span class="w6">EPSG:2180</span>
        <svg class="chat" viewBox="0 0 24 24"><path d="M12 3c7 0 11 3 11 8s-4 8-10 8l-2 4-1-4C4 19 1 16 1 11s4-8 11-8z" fill="#555" /><g fill="#fff"><circle cx="7" cy="11" r="1.600" /><circle cx="12" cy="11" r="1.600" /><circle cx="17" cy="11" r="1.600" /></g></svg>
      </div>
    </footer>

    <section v-for="d in dialogs" :key="d.id" class="dialog" :class="d.id">
      <div class="dt"><i class="tri down"></i><b>{{ d.title }}</b><svg viewBox="0 0 10 10"><path d="M1.500 1.500l7 7M8.500 1.500l-7 7" /></svg></div>
      <div class="db">
        <div class="main">
          <div class="form">
            <div class="tabs"><span class="act">Parametry</span><span>Plik zdarzeń</span></div>
            <div class="pane">
              <template v-for="(f, i) in d.fields" :key="i">
                <label>{{ f.l }}</label>
                <div class="row">
                  <div class="ctl" :class="f.type"><svg v-if="f.icon" viewBox="0 0 24 24" v-html="icons[f.icon]"></svg><span>{{ f.v }}</span><i v-if="f.type === 'combo'" class="tri down"></i></div>
                  <div v-if="f.b" class="dots">…<i class="tri down"></i></div>
                </div>
              </template>
              <div class="check"><span class="chk"><svg viewBox="0 0 14 14"><path d="M3 6.500l3 4 5.500-8.500" /></svg></span>Wczytaj plik wynikowy po zakończeniu</div>
            </div>
          </div>
          <template v-if="d.help">
            <div class="gut"><i class="tri right"></i><span></span></div>
            <div class="help">
              <article>
                <h3>Obszary chronione (gr. adm.)</h3>
                <p class="a">p, li { white-space: pre-wrap; }</p>
                <p class="b">Algorytm i model pozwalają na obliczenie<br />poligonów obszarów chronionych.</p>
                <h3 class="c">Parametry</h3>
                <h4>Lokalizacja jednostek</h4>
                <p>Warstwa wektorowa (punktowa) w której<br />przechowujemy lokalizacje punktów startowych<br />analizy - jednostek ochrony przeciwpożarowej.<br />Warstwa oprócz geometrii powinna posiadać co<br />najmniej pole identyfikatora (np. nazwa<br />jednostki, lub numer w SWD-ST)</p>
                <h4>Obszar badawczy</h4>
                <p>Obszar ograniczający wykonywaną analizę.<br />Najczęściej będzie to obszar administracyjny<br />danej jednostki nadrzędnej (np. granica<br />powiatu).</p>
                <h4>Pole identyfikatora (w tabeli lokalizacji</h4>
              </article>
              <div class="sb"><span><i class="tri up"></i></span><span class="thumb"></span><span class="end"><i class="tri down"></i></span></div>
            </div>
          </template>
        </div>
        <div class="prow"><div class="prog">0%</div><div class="btn off w80">Anuluj</div></div>
        <div class="brow">
          <div class="btn adv">Zaawansowane<i class="tri down"></i></div><div class="btn batch">Wykonaj jako przetwarzanie wsadowe...</div>
          <div class="btn w80 close"><svg viewBox="0 0 10 10"><path d="M1.500 1.500l7 7M8.500 1.500l-7 7" stroke="#444" stroke-width="2.800" /></svg><span><u>Z</u>amknij</span></div>
          <div class="btn run"><svg viewBox="0 0 16 18"><path d="M1 10l3-2 3 3L12 1l3-.5L8.500 17H6z" fill="#86cf3c" stroke="#4e9a18" stroke-width=".8" /></svg>Uruchom</div>
        </div>
      </div>
    </section>
  </div>
</template>

<style>
body { margin: 0; overflow: hidden; }
</style>
<style scoped>
* { box-sizing: border-box; }
.app { position: relative; width: 1917px; height: 1050px; overflow: hidden; display: flex; flex-direction: column; background: #efefef; color: #1b1b1b; font: 12px/16px "Noto Sans", "Open Sans", sans-serif; white-space: nowrap; }
svg { display: block; flex: none; fill: none; }
i { font-style: normal; }
u { text-underline-offset: 2px; }
.tri { display: block; width: 0; height: 0; flex: none; border: 4px solid transparent; }
.tri.down { border-top-color: #4a4a4a; border-bottom: 0; }
.tri.up { border-bottom-color: #4a4a4a; border-top: 0; }
.tri.right { border-left-color: #4a4a4a; border-right: 0; }

.titlebar { height: 20px; flex: none; display: flex; align-items: center; background: linear-gradient(#e2e2e2, #cecece); color: #666; padding: 0 5px 0 4px; text-shadow: 0 1px #eee; }
.titlebar b { flex: 1; text-align: center; padding-left: 18px; }
.wm { display: flex; width: 56px; justify-content: space-between; }
.wm svg { width: 10px; height: 10px; stroke: #666; stroke-width: 2.200; }
.menubar { height: 22px; flex: none; display: flex; gap: 14.400px; padding: 2px 0 0 9px; border-bottom: 1px solid #cdcdcd; }
.toolbar { height: 39px; flex: none; display: flex; align-items: center; background: linear-gradient(#f8f8f8, #ebebeb); border-bottom: 1px solid #b2b2b2; }
.toolbar:nth-of-type(3) { height: 38px; }
.tool { width: 33px; height: 31px; flex: none; display: flex; align-items: center; justify-content: center; border-radius: 3px; }
.tool svg { width: 24px; height: 24px; overflow: visible; }
.tool.on, .dd.on { background: #d9d9d9; border: 1px solid #b0b0b0; }
.dd { width: 11.500px; height: 31px; flex: none; display: flex; align-items: center; justify-content: center; border-radius: 3px; }
.dim .tri { opacity: .35; }
.handle { width: 16.200px; flex: none; display: flex; justify-content: center; }
.handle::before { content: ""; width: 5px; height: 18px; background: radial-gradient(circle at 1px 1px, #aaa .8px, transparent 1px) 0 0 / 3px 3px; }
.handle.lead { width: 10px; }
.vsep { width: 7px; flex: none; display: flex; justify-content: center; }
.vsep::before { content: ""; width: 1px; height: 19px; background: #c5c5c5; }

.work { flex: none; height: 862px; display: flex; }
.panel { width: 680px; display: flex; flex-direction: column; border-right: 1px solid #b8b8b8; }
.panel h2 { margin: 0; height: 23px; flex: none; font: inherit; padding: 3px 0 0 2px; }
.ptools { height: 29px; flex: none; display: flex; align-items: center; padding: 0 0 3px 6px; gap: 9px; border-bottom: 1px solid #a9a9a9; }
.ptools svg { width: 16px; height: 16px; }
.ps { width: 1px; height: 12px; background: #c8c8c8; margin: 0 -2px 0 -1px; }
.psearch { height: 25px; flex: none; display: flex; align-items: center; background: #fff; color: #8a8a8a; padding: 0 0 0 7px; gap: 7px; border-bottom: 2px solid #adadad; }
.psearch svg, .locator svg { width: 13px; height: 13px; }
.tree { margin: 0; padding: 0; list-style: none; height: 755px; flex: none; background: #fff; overflow: hidden; border-bottom: 1px solid #b0b0b0; }
.tree li { height: 19px; display: flex; align-items: center; }
.tree li.plain { height: 17px; }
.tree svg { width: 16px; height: 16px; margin-right: 6px; overflow: visible; }
.tree .on { background: #308cc6; color: #fff; }
.tw { width: 18px; margin-right: 4px; display: flex; justify-content: center; flex: none; }
.d1 { padding-left: 20px; }
.d2 { padding-left: 20px; }
.d3 { padding-left: 40px; }
.ptabs { display: flex; padding-top: 3px; }
.ptabs span { height: 24px; padding: 3px 11px 0 12px; background: #dedede; border: 1px solid #b9b9b9; border-left: 0; }
.ptabs span:first-child { width: 73px; padding-left: 11px; }
.ptabs span:nth-child(2) { width: 124px; }
.split { width: 21px; border-left: 13px solid #efefef; border-right: 1px solid #aaa; box-shadow: inset 1px 0 #bbb; }
.map { width: 1216px; height: 860px; margin-top: 1px; border-top: 1px solid #b0b0b0; }
.rl { stroke: #dc4040; stroke-width: .9; }
.rd { stroke: #4a7ab8; stroke-width: 2.900; stroke-dasharray: 6 5.800; }
.ri { stroke: #4a7ab8; stroke-width: 3.200; stroke-linecap: round; stroke-dasharray: 2.700 7.800; }
.zone { stroke: #222; stroke-width: 1; stroke-linejoin: round; }
.mk { stroke-width: 1.200; }
.mk.r { fill: #dc1f28; stroke: #7b1216; }
.mk.b { fill: #4a7ab8; stroke: #2c5585; }

.status { flex: 1; display: flex; align-items: center; border-top: 1px solid #b5b5b5; margin-top: -1px; }
.locator { width: 223px; height: 25px; margin: 1px 0 0 2px; border: 1px solid #ababab; border-radius: 3px; background: #fff; color: #8a8a8a; display: flex; align-items: center; padding-left: 8px; gap: 7px; }
.sright { margin-left: auto; width: 784px; display: flex; align-items: center; font-size: 9px; padding-top: 2px; }
.sright > * { flex: none; }
.w1 { width: 58px; } .w2 { width: 26px; } .w3 { width: 59px; } .w4 { width: 34px; margin-left: 10px; } .w5 { width: 54px; margin-left: 6px; } .w6 { width: 63px; }
.sf { height: 23px; border: 1px solid #ababab; border-radius: 3px; background: #fff; display: flex; align-items: center; padding-left: 4px; }
.coord { width: 83px; padding-left: 8px; }
.scale { width: 88px; }
.spin { width: 87px; }
.sf em { margin-left: auto; width: 20px; height: 100%; border-left: 1px solid #bbb; background: linear-gradient(#fff, #eee); display: flex; flex-direction: column; align-items: center; justify-content: center; gap: 4px; }
.spin em { width: 14px; }
.mouse { width: 16px; height: 16px; margin: 0 12px 0 5px; }
.lock { width: 13px; height: 13px; margin: 0 9px 0 11px; }
.crs { width: 15px; height: 15px; margin-right: 3px; }
.chat { width: 17px; height: 17px; }
.chk { width: 14px; height: 14px; border: 1px solid #b0b0b0; background: #fff; flex: none; }
.sright .chk { margin-left: 6px; }
.chk svg { width: 12px; height: 12px; stroke: #111; stroke-width: 2; }

.dialog { position: absolute; width: 714px; background: #efefef; border: 1px solid #8b8b8b; border-radius: 6px 6px 0 0; box-shadow: 0 5px 16px 2px rgba(0, 0, 0, .45); display: flex; flex-direction: column; }
.first { left: 401px; top: 113px; height: 320px; }
.second { left: 288px; top: 460px; height: 564px; }
.dt { height: 23px; flex: none; display: flex; align-items: center; padding: 0 10px; border-radius: 5px 5px 0 0; background: linear-gradient(#e0e0e0, #cecece); color: #b4b4b4; text-shadow: 0 1px #e8e8e8; box-shadow: inset 0 1px #f4f4f4; }
.dt b { flex: 1; text-align: center; padding: 3px 0 0 1px; }
.dt .tri { border-top-color: #b6b6b6; }
.dt svg { width: 9px; height: 9px; stroke: #b6b6b6; stroke-width: 1.600; }
.db { flex: 1; display: flex; flex-direction: column; padding: 11px; min-height: 0; }
.main { flex: 1; display: flex; min-height: 0; margin-bottom: 29px; }
.form { flex: 1; display: flex; flex-direction: column; }
.tabs { height: 27px; flex: none; display: flex; align-items: flex-end; }
.tabs span { height: 25px; width: 91px; display: flex; align-items: center; justify-content: center; border: 1px solid #b0b0b0; border-left: 0; border-bottom: 0; border-radius: 0 3px 0 0; background: #e4e4e4; padding-top: 2px; }
.tabs .act { height: 28px; width: 85px; margin-bottom: -1px; background: #fff; border-left: 1px solid #b0b0b0; border-radius: 3px 3px 0 0; position: relative; padding: 0 0 1px; }
.pane { flex: 1; border: 1px solid #b0b0b0; background: linear-gradient(#fdfdfd 7px, #efefef 7px); box-shadow: inset 1px 0 #fff, inset -1px 0 #fff; padding: 11px 5px 0; }
.pane label { display: block; height: 18px; line-height: 18px; margin-bottom: 5px; }
.row { display: flex; gap: 6px; height: 25px; margin-bottom: 6px; }
.ctl { flex: 1; display: flex; align-items: center; border: 1px solid #ababab; border-radius: 3px; background: #fff; padding: 1px 16px 0 3px; }
.ctl svg { width: 16px; height: 16px; margin-right: 3px; }
.ctl .tri { margin-left: auto; margin-right: -9px; }
.combo { background: linear-gradient(#fff, #ebebeb); padding-left: 5px; }
.ph { color: #8f8f8f; }
.dots { width: 24px; height: 24px; border: 1px solid #ababab; border-radius: 3px; background: linear-gradient(#fff, #ebebeb); text-align: center; position: relative; line-height: 21px; }
.dots .tri { position: absolute; right: 1px; bottom: 3px; border-width: 3px; border-bottom: 0; }
.check { height: 24px; display: flex; align-items: center; gap: 5px; }
.prow, .brow { height: 25px; flex: none; display: flex; gap: 6px; }
.prow { margin-bottom: 6px; }
.prog { flex: 1; border: 1px solid #ababab; border-radius: 3px; background: #fff; text-align: center; line-height: 24px; }
.btn { border: 1px solid #ababab; border-radius: 3px; background: linear-gradient(#fff, #ebebeb); display: flex; align-items: center; justify-content: center; padding-top: 1px; flex: none; }
.off { color: #c2c2c2; border-color: #c6c6c6; }
.w80 { width: 80px; }
.adv { width: 127px; gap: 15px; padding-left: 9px; }
.adv .tri { border-width: 3px; border-bottom: 0; }
.batch { width: 251px; }
.close { margin-left: auto; gap: 5px; }
.close svg { width: 9px; height: 9px; }
.run { width: 81px; border-color: #2d7099; background: linear-gradient(#f8fbfd, #dfe9f0); gap: 3px; }
.run svg { width: 15px; height: 17px; }

.gut { width: 16px; flex: none; padding-left: 4px; display: flex; flex-direction: column; gap: 200px; }
.gut span { width: 1px; height: 16px; margin-left: 3px; border-left: 1px dotted #999; }
.gut .tri { margin-top: 2px; }
.help { width: 299px; flex: none; border: 1px solid #b0b0b0; background: #fff; display: flex; overflow: hidden; }
article { flex: 1; padding-left: 4px; color: #777; min-width: 0; overflow: hidden; }
article h3 { margin: 6px 0 0; font: bold 18px/24px "Noto Sans", sans-serif; color: #555; }
article h4 { margin: 0; font: bold 14px/20px "Noto Sans", sans-serif; color: #6a6a6a; }
article p { margin: 13px 0 14px; line-height: 16.050px; }
article .a { margin: 13px 0; }
article .b { margin: 0 0 18px; }
article h3.c { margin: 0 0 15px; }
.sb { width: 15px; flex: none; background: #e6e6e6; border-left: 1px solid #b0b0b0; display: flex; flex-direction: column; }
.sb span { height: 13px; flex: none; display: flex; align-items: center; justify-content: center; background: #f8f8f8; border-bottom: 1px solid #b8b8b8; }
.sb .thumb { height: 145px; background: linear-gradient(90deg, #fdfdfd, #ececec); }
.sb .end { margin-top: auto; border-top: 1px solid #b8b8b8; border-bottom: 0; }
</style>
